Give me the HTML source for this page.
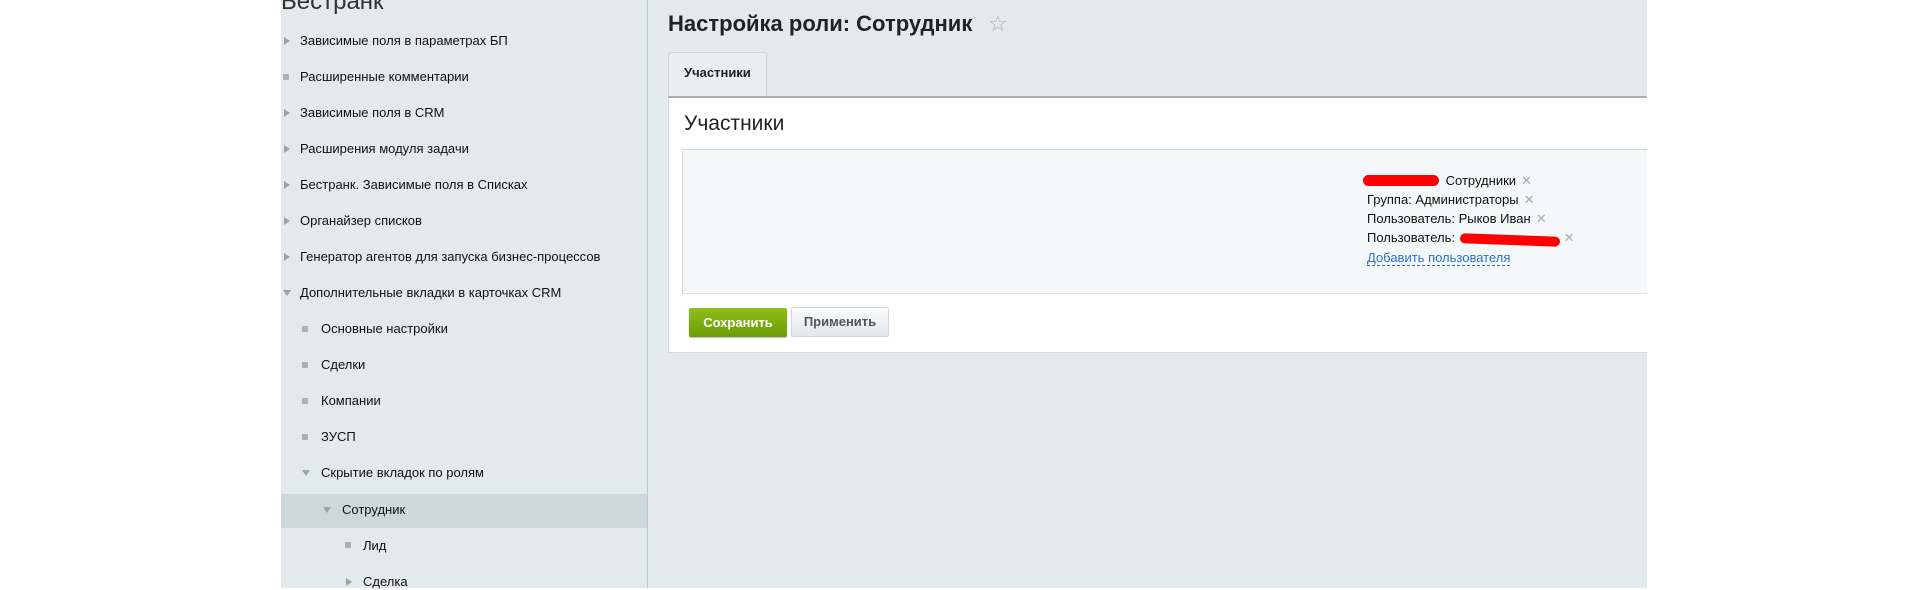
<!DOCTYPE html>
<html><head><meta charset="utf-8"><style>
*{margin:0;padding:0;box-sizing:border-box}
body{width:1928px;height:588px;background:#fff;font-family:"Liberation Sans",Arial,sans-serif;position:relative;overflow:hidden;color:#000}
.side{position:absolute;left:281px;top:0;width:367px;height:588px;background:#e3eaec;border-right:1px solid #b9c8d2}
.main{position:absolute;left:648px;top:0;width:999px;height:588px;background:#e3eaec}
.it{position:absolute;font-size:13px;color:#111;white-space:nowrap;line-height:16px}
.ar{position:absolute;width:0;height:0;border-top:4px solid transparent;border-bottom:4px solid transparent;border-left:6px solid #9aa3a8}
.dn{position:absolute;width:0;height:0;border-left:4px solid transparent;border-right:4px solid transparent;border-top:6px solid #9aa3a8}
.bu{position:absolute;width:6px;height:6px;border-radius:1px;background:#a9b1b5}
.a{position:absolute;font-size:13px;line-height:16px;color:#111;white-space:nowrap}
.x{color:#aaa;margin-left:5px;font-size:13px}
</style></head><body>
<div class="side">
<div style="position:absolute;left:0;top:-12px;font-size:24px;color:#333">Бестранк</div>
<div style="position:absolute;left:0;top:494px;width:366px;height:34px;background:#cdd8dd"></div>
</div>
<div class="main"></div>

<div class="ar" style="left:284px;top:37px"></div><div class="it" style="left:300px;top:33px">Зависимые поля в параметрах БП</div>
<div class="bu" style="left:283px;top:74px"></div><div class="it" style="left:300px;top:69px">Расширенные комментарии</div>
<div class="ar" style="left:284px;top:109px"></div><div class="it" style="left:300px;top:105px">Зависимые поля в CRM</div>
<div class="ar" style="left:284px;top:145px"></div><div class="it" style="left:300px;top:141px">Расширения модуля задачи</div>
<div class="ar" style="left:284px;top:181px"></div><div class="it" style="left:300px;top:177px">Бестранк. Зависимые поля в Списках</div>
<div class="ar" style="left:284px;top:217px"></div><div class="it" style="left:300px;top:213px">Органайзер списков</div>
<div class="ar" style="left:284px;top:253px"></div><div class="it" style="left:300px;top:249px">Генератор агентов для запуска бизнес-процессов</div>
<div class="dn" style="left:283px;top:290px"></div><div class="it" style="left:300px;top:285px">Дополнительные вкладки в карточках CRM</div>
<div class="bu" style="left:302px;top:326px"></div><div class="it" style="left:321px;top:321px">Основные настройки</div>
<div class="bu" style="left:302px;top:362px"></div><div class="it" style="left:321px;top:357px">Сделки</div>
<div class="bu" style="left:302px;top:398px"></div><div class="it" style="left:321px;top:393px">Компании</div>
<div class="bu" style="left:302px;top:434px"></div><div class="it" style="left:321px;top:429px">ЗУСП</div>
<div class="dn" style="left:302px;top:470px"></div><div class="it" style="left:321px;top:465px">Скрытие вкладок по ролям</div>
<div class="dn" style="left:323px;top:507px"></div><div class="it" style="left:342px;top:502px">Сотрудник</div>
<div class="bu" style="left:345px;top:542px"></div><div class="it" style="left:363px;top:538px">Лид</div>
<div class="ar" style="left:346px;top:578px"></div><div class="it" style="left:363px;top:574px">Сделка</div>

<div style="position:absolute;left:668px;top:11px;font-size:22px;font-weight:bold;color:#222">Настройка роли: Сотрудник</div>
<div style="position:absolute;left:988px;top:11px;font-size:22px;color:#a8b0b5">☆</div>

<div style="position:absolute;left:668px;top:52px;width:99px;height:46px;background:#e9eef0;border:1px solid #cfd6d9;border-bottom:none;border-radius:3px 3px 0 0"></div>
<div style="position:absolute;left:684px;top:65px;font-size:13px;font-weight:bold;color:#222">Участники</div>
<div style="position:absolute;left:668px;top:96px;width:979px;height:257px;background:#fff;border-top:2px solid #a9b0b4;border-left:1px solid #d5dadc;border-bottom:1px solid #d5dadc"></div>
<div style="position:absolute;left:684px;top:112px;font-size:21px;color:#222">Участники</div>
<div style="position:absolute;left:682px;top:149px;width:965px;height:145px;background:#f5f8f9;border-top:1px solid #d2d7da;border-left:1px solid #d9dee0;border-bottom:1px solid #dfe3e5"></div>

<div class="a" style="left:1366px;top:173px"><span style="display:inline-block;width:76px"></span> Сотрудники<span class="x">✕</span></div>
<div style="position:absolute;left:1363px;top:175px;width:76px;height:11px;background:#f00;border-radius:6px"></div>
<div class="a" style="left:1367px;top:192px">Группа: Администраторы<span class="x">✕</span></div>
<div class="a" style="left:1367px;top:211px">Пользователь: Рыков Иван<span class="x">✕</span></div>
<div class="a" style="left:1367px;top:230px">Пользователь: <span style="display:inline-block;width:100px"></span><span class="x">✕</span></div>
<div style="position:absolute;left:1460px;top:235px;width:100px;height:10px;background:#f00;border-radius:5px;transform:rotate(2deg)"></div>
<div class="a" style="left:1367px;top:250px;color:#2a6ed4;border-bottom:1px dashed #2a6ed4;line-height:15px">Добавить пользователя</div>

<div style="position:absolute;left:689px;top:308px;width:98px;height:29px;background:linear-gradient(#8fbf1a,#6b9c05);border-radius:2px;color:#fff;font-weight:bold;font-size:13px;text-align:center;line-height:29px;box-shadow:0 1px 1px rgba(0,0,0,.25)">Сохранить</div>
<div style="position:absolute;left:791px;top:307px;width:98px;height:30px;background:linear-gradient(#fbfcfc,#e3e8ea);border:1px solid #d0d6d9;border-radius:2px;color:#555;font-weight:bold;font-size:13px;text-align:center;line-height:28px">Применить</div>
</body></html>
